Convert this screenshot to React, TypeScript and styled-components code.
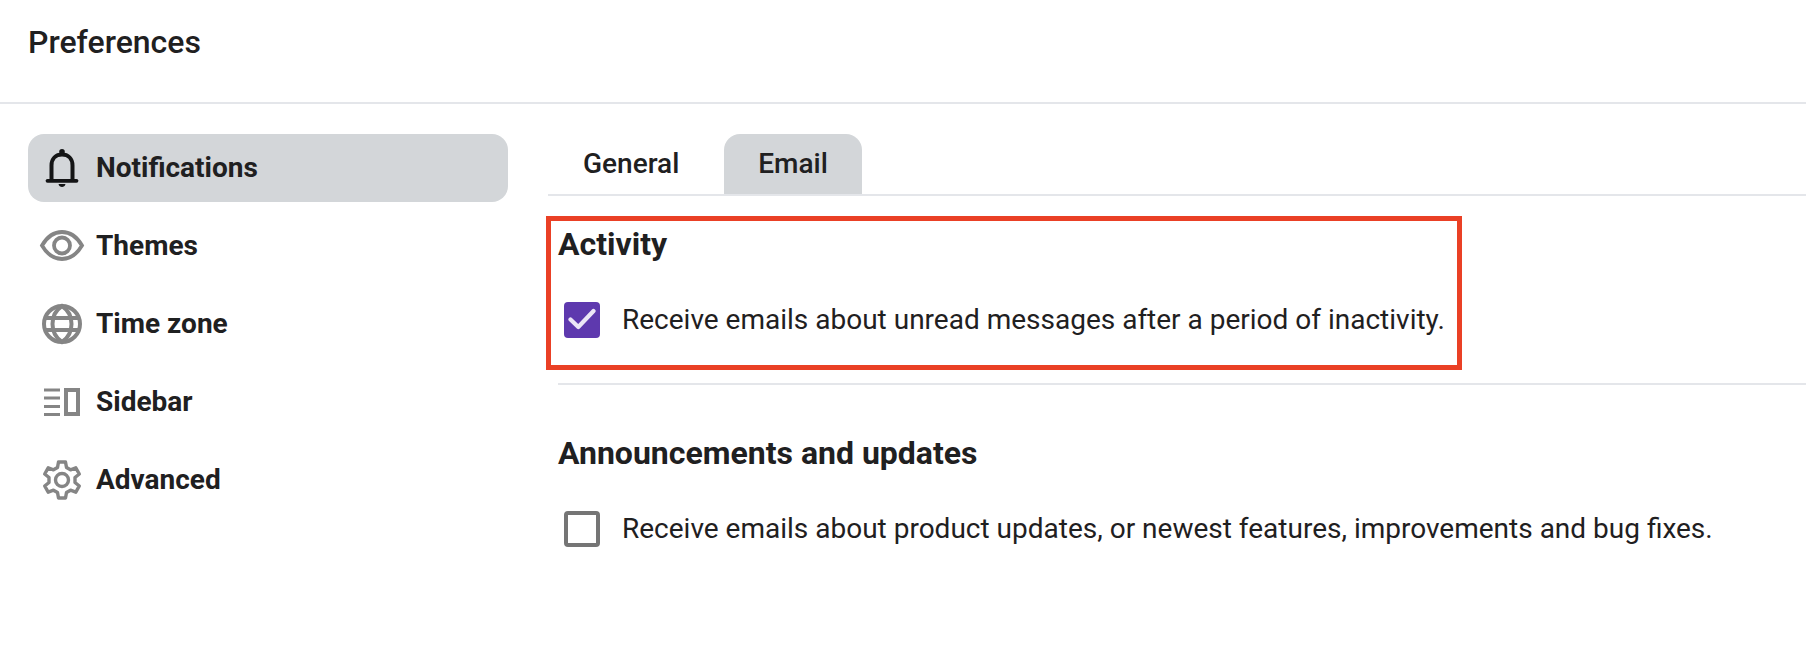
import React from "react";
import styled, { createGlobalStyle } from "styled-components";

const GlobalStyle = createGlobalStyle`
  html, body {
    margin: 0;
    background: #fff;
  }
  body {
    font-family: Roboto, "Liberation Sans", sans-serif;
    color: #1f2021;
  }
`;

const Page = styled.div`
  width: 1806px;
  height: 658px;
  overflow: hidden;
`;

const Header = styled.header`
  height: 104px;
  box-sizing: border-box;
  padding: 22px 28px 0;
  border-bottom: 2px solid #e4e6ea;
`;

const Title = styled.h1`
  margin: 0;
  font-size: 32px;
  line-height: 40px;
  font-weight: 500;
`;

const Body = styled.div`
  display: flex;
  padding: 30px 0 0 28px;
`;

const Sidebar = styled.nav`
  width: 480px;
  flex: none;
  display: flex;
  flex-direction: column;
  gap: 10px;
`;

const NavItem = styled.div<{ $active?: boolean }>`
  height: 68px;
  display: flex;
  align-items: center;
  gap: 11px;
  padding-left: 11px;
  border-radius: 16px;
  background: ${({ $active }) => ($active ? "#d3d6d9" : "transparent")};
  font-size: 28px;
  font-weight: 700;
  color: #1f2021;
`;

const NavLabel = styled.span`
  padding-bottom: 2px;
`;

const NavIcon = styled.svg<{ $active?: boolean }>`
  width: 46px;
  height: 46px;
  flex: none;
  color: ${({ $active }) => ($active ? "#141516" : "#858585")};
`;

const Main = styled.main`
  flex: 1;
  margin-left: 40px;
  min-width: 0;
`;

const Tabs = styled.div`
  display: flex;
  gap: 11px;
  height: 62px;
  box-sizing: border-box;
  padding-left: 1px;
  border-bottom: 2px solid #e4e6ea;
`;

const Tab = styled.div<{ $active?: boolean }>`
  height: 60px;
  box-sizing: border-box;
  display: flex;
  align-items: center;
  padding: 0 34px 2px;
  border-radius: 16px 16px 0 0;
  background: ${({ $active }) => ($active ? "#d3d6d9" : "transparent")};
  font-size: 28px;
  font-weight: 500;
`;

const Section = styled.section<{ $divided?: boolean }>`
  position: relative;
  margin-left: 10px;
  padding-top: ${({ $divided }) => ($divided ? "48px" : "28px")};
  height: ${({ $divided }) => ($divided ? "auto" : "189px")};
  box-sizing: border-box;
  border-bottom: ${({ $divided }) => ($divided ? "none" : "2px solid #e4e6ea")};
`;

const Heading = styled.h2`
  margin: 0;
  font-size: 32px;
  line-height: 40px;
  font-weight: 700;
`;

const Option = styled.label`
  display: flex;
  align-items: center;
  gap: 22px;
  margin-top: 36px;
  padding-left: 6px;
  font-size: 28px;
  line-height: 40px;
`;

const Box = styled.span<{ $checked?: boolean }>`
  width: 36px;
  height: 36px;
  flex: none;
  box-sizing: border-box;
  border-radius: 4px;
  display: flex;
  align-items: center;
  justify-content: center;
  background: ${({ $checked }) => ($checked ? "#5e39ae" : "#fff")};
  border: ${({ $checked }) => ($checked ? "none" : "4px solid #757575")};
`;

// annotation drawn over the screenshot
const Highlight = styled.div`
  position: absolute;
  left: -12px;
  top: 20px;
  width: 916px;
  height: 154px;
  box-sizing: border-box;
  border: 5px solid #ea4025;
  pointer-events: none;
`;

function Bell() {
  return (
    <NavIcon $active viewBox="0 0 46 46" fill="none" stroke="currentColor" strokeWidth="4">
      <path d="M12.5 35V20.5C12.5 13.5 17 9.5 23 9.5S33.5 13.5 33.5 20.5V35" />
      <path d="M8.5 35.8H37.5" strokeWidth="3.8" strokeLinecap="round" />
      <circle cx="23" cy="6.8" r="2.8" fill="currentColor" stroke="none" />
      <path d="M19.5 39H26.5C26 41.2 24.6 42 23 42S20 41.2 19.5 39Z" fill="currentColor" stroke="none" />
    </NavIcon>
  );
}

function Eye() {
  return (
    <NavIcon viewBox="0 0 46 46" fill="none" stroke="currentColor" strokeWidth="3.8">
      <path d="M3 22.5C8 14 15 9 23 9S38 14 43 22.5C38 31 31 36 23 36S8 31 3 22.5Z" />
      <circle cx="23" cy="22.5" r="8" />
    </NavIcon>
  );
}

function Globe() {
  return (
    <NavIcon viewBox="0 0 46 46" fill="none" stroke="currentColor" strokeWidth="4">
      <circle cx="23" cy="23" r="18" />
      <path d="M5 17H41M5 29H41" />
      <path d="M23 5C15.5 10 13.5 17 13.5 23S15.5 36 23 41C30.5 36 32.5 29 32.5 23S30.5 10 23 5Z" />
    </NavIcon>
  );
}

function SidebarGlyph() {
  return (
    <NavIcon viewBox="0 0 46 46" fill="none" stroke="currentColor">
      <path d="M5 11H21M5 19H21M5 27.5H21M5 35.5H21" strokeWidth="3.2" />
      <rect x="27" y="11" width="12" height="24" strokeWidth="4" />
    </NavIcon>
  );
}

function Gear() {
  return (
    <NavIcon viewBox="0 0 46 46" fill="none" stroke="currentColor" strokeWidth="3.4" strokeLinejoin="round">
      <path d="M19.5 5H26.5L27.5 10.5L31.5 12.8L36.8 10.8L40.3 17L36 20.5V25.5L40.3 29L36.8 35.2L31.5 33.2L27.5 35.5L26.5 41H19.5L18.5 35.5L14.5 33.2L9.2 35.2L5.7 29L10 25.5V20.5L5.7 17L9.2 10.8L14.5 12.8L18.5 10.5Z" />
      <circle cx="23" cy="23" r="6.5" />
    </NavIcon>
  );
}

const NAV = [
  { label: "Notifications", icon: <Bell />, active: true },
  { label: "Themes", icon: <Eye /> },
  { label: "Time zone", icon: <Globe /> },
  { label: "Sidebar", icon: <SidebarGlyph /> },
  { label: "Advanced", icon: <Gear /> },
];

export default function App() {
  return (
    <Page>
      <GlobalStyle />
      <Header>
        <Title>Preferences</Title>
      </Header>
      <Body>
        <Sidebar>
          {NAV.map((item) => (
            <NavItem key={item.label} $active={item.active}>
              {item.icon}
              <NavLabel>{item.label}</NavLabel>
            </NavItem>
          ))}
        </Sidebar>
        <Main>
          <Tabs>
            <Tab>General</Tab>
            <Tab $active>Email</Tab>
          </Tabs>
          <Section>
            <Heading>Activity</Heading>
            <Option>
              <Box $checked>
                <svg width="28" height="24" viewBox="0 0 28 24" fill="none">
                  <path d="M2.5 11.5L10.3 19L25.5 3" stroke="#ece6f6" strokeWidth="4.2" strokeLinecap="round" strokeLinejoin="round" />
                </svg>
              </Box>
              Receive emails about unread messages after a period of inactivity.
            </Option>
            <Highlight />
          </Section>
          <Section $divided>
            <Heading>Announcements and updates</Heading>
            <Option>
              <Box />
              Receive emails about product updates, or newest features, improvements and bug fixes.
            </Option>
          </Section>
        </Main>
      </Body>
    </Page>
  );
}
